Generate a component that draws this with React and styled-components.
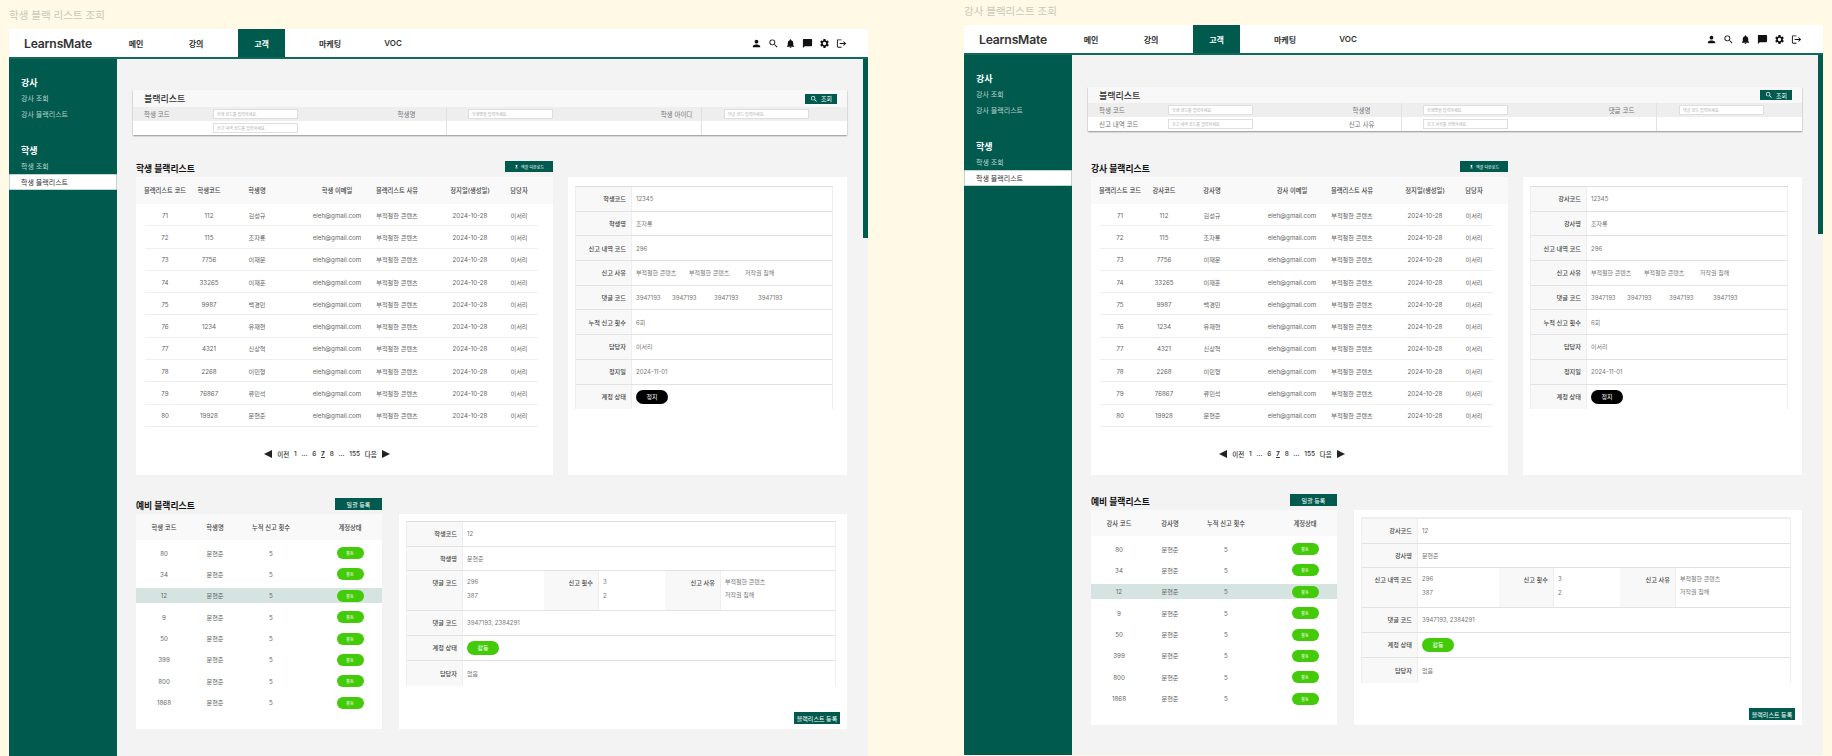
import React from 'react';
import styled, { createGlobalStyle } from 'styled-components';
import {
  MdPerson,
  MdSearch,
  MdNotifications,
  MdChatBubble,
  MdSettings,
  MdLogout,
  MdFileUpload,
} from 'react-icons/md';

const GREEN = '#005A4E';
const PILL = '#43CA08';
const FONT = 'Inter, "Noto Sans CJK KR", sans-serif';

const GlobalStyle = createGlobalStyle`
  html, body {
    margin: 0;
    height: 756px;
    overflow: hidden;
    background: #FFF9E6;
    font-family: ${FONT};
  }
  * { box-sizing: border-box; }
`;

const Page = styled.div`
  display: flex;
  gap: 96px;
  padding-left: 9px;
  width: 1832px;
  height: 756px;
`;

const Screen = styled.div`
  display: flex;
  flex-direction: column;
  width: 859px;
  height: 756px;
`;

const ScreenTitle = styled.div`
  height: ${(p) => p.$top}px;
  padding-bottom: ${(p) => p.$pad}px;
  display: flex;
  align-items: center;
  font-size: 10.5px;
  color: #c9c8bd;
  flex: none;
`;

const Frame = styled.div`
  position: relative;
  flex: 1;
  min-height: 0;
  display: flex;
  flex-direction: column;
  margin-bottom: ${(p) => p.$bottom}px;
`;

const Header = styled.header`
  display: flex;
  align-items: stretch;
  height: 30px;
  flex: none;
  background: #fff;
  border-bottom: 2px solid #126a5d;
  padding-right: 21px;
`;

const Logo = styled.div`
  width: 103.5px;
  padding-left: 15px;
  display: flex;
  align-items: center;
  font-size: 12.2px;
  font-weight: 600;
  letter-spacing: -0.2px;
  color: #333;
`;

const NavItem = styled.div`
  width: 47px;
  margin-left: ${(p) => p.$ml}px;
  display: flex;
  align-items: center;
  justify-content: center;
  font-size: 8px;
  font-weight: 600;
  color: ${(p) => (p.$active ? '#fff' : '#333')};
  background: ${(p) => (p.$active ? GREEN : 'transparent')};
`;

const IconBar = styled.div`
  margin-left: auto;
  display: flex;
  align-items: center;
  gap: 6px;
  font-size: 11px;
  color: #111;

  svg { display: block; }
`;

const Body = styled.div`
  flex: 1;
  min-height: 0;
  display: flex;
`;

const Sidebar = styled.nav`
  width: 108px;
  flex: none;
  background: ${GREEN};
  padding-top: 15px;
`;

const SideGroup = styled.div`
  margin-bottom: 20px;
`;

const SideTitle = styled.div`
  height: 16px;
  padding-left: 12px;
  display: flex;
  align-items: center;
  font-size: 9px;
  font-weight: 700;
  color: #fff;
`;

const SideItem = styled.div`
  height: 16px;
  padding-left: 12px;
  display: flex;
  align-items: center;
  font-size: 7px;
  color: ${(p) => (p.$active ? '#333' : 'rgba(255,255,255,0.72)')};
  background: ${(p) => (p.$active ? '#fff' : 'transparent')};
  box-shadow: ${(p) => (p.$active ? 'inset 0 0 0 0.5px #7fb0a8' : 'none')};
`;

const Main = styled.main`
  flex: 1;
  min-width: 0;
  background: #f3f3f3;
  padding: ${(p) => p.$pad}px 21px 0 16px;
`;

const ScrollThumb = styled.div`
  position: absolute;
  top: 30px;
  right: 0;
  width: 5px;
  height: 179px;
  background: ${GREEN};
`;

const SearchPanel = styled.section`
  background: #fff;
  box-shadow: 0 1px 1.5px rgba(0, 0, 0, 0.4);
  margin-bottom: ${(p) => p.$mb}px;
`;

const SearchHead = styled.div`
  height: ${(p) => p.$h}px;
  background: #f8f8f8;
  padding: 0 10px 0 11px;
  display: flex;
  align-items: center;
  justify-content: space-between;
`;

const SearchTitle = styled.h2`
  margin: 0;
  font-size: 9px;
  font-weight: 500;
  color: #333;
`;

const SearchButton = styled.button`
  width: 32px;
  height: 10px;
  border: 0;
  padding: 0;
  background: ${GREEN};
  color: #fff;
  font-family: inherit;
  font-size: 6px;
  display: flex;
  align-items: center;
  justify-content: center;
  gap: 3px;
`;

const SearchRow = styled.div`
  display: grid;
  grid-template-columns: 80px 154px 80px 205px 50px 145px;
  height: 14px;
  background: ${(p) => (p.$shaded ? '#eeeeee' : '#fff')};
`;

const SearchLabel = styled.div`
  display: flex;
  align-items: center;
  white-space: nowrap;
  font-size: 6.5px;
  color: #777;
  justify-content: ${(p) => (p.$left ? 'flex-start' : 'center')};
  padding-left: ${(p) => (p.$left ? 11 : 0)}px;
  padding-right: ${(p) => p.$shift || 0}px;
  border-right: ${(p) => (p.$divider ? '1px solid #e2e2e2' : '0')};
`;

const SearchCell = styled.div`
  display: flex;
  align-items: center;
  padding-left: ${(p) => p.$pad || 0}px;
`;

const SearchInput = styled.input`
  width: 85px;
  height: 10px;
  border: 1px solid #dfdfdf;
  background: #fff;
  padding: 0 3px;
  font-family: inherit;
  font-size: 4px;

  &::placeholder { color: #aaa; }
`;

const SectionHead = styled.div`
  display: flex;
  justify-content: space-between;
  align-items: center;
  height: 16px;
  margin-left: 3px;
  width: ${(p) => p.$w}px;
`;

const SectionTitle = styled.h3`
  margin: 0 0 2px;
  font-size: 8.8px;
  font-weight: 700;
  color: #111;
`;

const GreenButton = styled.button`
  align-self: flex-start;
  width: ${(p) => p.$w}px;
  height: ${(p) => p.$h}px;
  border: 0;
  padding: 0;
  background: ${GREEN};
  color: #fff;
  font-family: inherit;
  font-size: ${(p) => p.$size}px;
  display: flex;
  align-items: center;
  justify-content: center;
  gap: 2px;
  white-space: nowrap;
`;

const SectionBody = styled.div`
  display: flex;
  gap: ${(p) => p.$gap}px;
  margin-left: 3px;
  margin-bottom: ${(p) => p.$mb || 0}px;
`;

const Card = styled.div`
  width: ${(p) => p.$w}px;
  height: ${(p) => p.$h}px;
  flex: none;
  background: #fff;
`;

const LIST_COLS = '58px 30px 78px 70px 50px 82px 30px 19px';

const ListHead = styled.div`
  display: grid;
  grid-template-columns: ${LIST_COLS};
  height: 27px;
  background: #f9f9f9;
  font-size: 6.3px;
  font-weight: 500;
  color: #444;
`;

const ListRow = styled.div`
  display: grid;
  grid-template-columns: ${LIST_COLS};
  height: 22.3px;
  font-size: 6.2px;
  color: #666;
  background: linear-gradient(#eee, #eee) 9px 100% / 393px 1px no-repeat;
`;

const ListCell = styled.div`
  display: flex;
  align-items: center;
  justify-content: center;
  white-space: nowrap;

  &:nth-child(3) { padding-right: 12px; }
  &:nth-child(6) { padding-left: 14px; }
`;

const Pager = styled.div`
  display: flex;
  align-items: center;
  justify-content: center;
  gap: 4.8px;
  height: 16px;
  margin-top: 19px;
  padding-right: 35px;
  font-size: 6.5px;
  font-weight: 500;
  color: #333;
`;

const PageNum = styled.span`
  text-decoration: ${(p) => (p.$current ? 'underline' : 'none')};
  font-weight: ${(p) => (p.$current ? 700 : 500)};
`;

const PagerArrow = styled.svg`
  width: 8px;
  height: 8px;
  fill: #222;
`;

const DetailCard = styled(Card)`
  display: flex;
  flex-direction: column;
  padding: ${(p) => p.$pad};
`;

const DetailTable = styled.div`
  border-top: ${(p) => (p.$heavy ? '2px solid #eee' : '1px solid #ddd')};
  border-left: 1px solid #eee;
  border-right: 1px solid #eee;
`;

const DetailRow = styled.div`
  display: grid;
  grid-template-columns: ${(p) => p.$cols || '56px 1fr'};
  height: ${(p) => p.$h}px;
  border-bottom: ${(p) => (p.$last ? '0' : '1px solid #e2e2e2')};
`;

const DetailLabel = styled.div`
  background: #f8f8f8;
  border-right: 1px solid #eee;
  padding: ${(p) => (p.$top ? '7px 5px 0 0' : '0 5px 0 0')};
  display: flex;
  align-items: ${(p) => (p.$top ? 'flex-start' : 'center')};
  justify-content: flex-end;
  white-space: nowrap;
  font-size: 6.2px;
  font-weight: 500;
  color: #444;
`;

const DetailValue = styled.div`
  padding: ${(p) => (p.$top ? '7px 0 0 4px' : '0 0 0 4px')};
  display: ${(p) => (p.$top ? 'block' : 'flex')};
  align-items: center;
  font-size: 6px;
  color: #777;
  white-space: nowrap;
`;

const ValueGrid = styled.div`
  display: grid;
  grid-template-columns: ${(p) => p.$cols};
`;

const StackLine = styled.div`
  line-height: 7px;
  margin-bottom: ${(p) => p.$gap}px;
`;

const Pill = styled.span`
  display: inline-flex;
  align-items: center;
  justify-content: center;
  width: ${(p) => (p.$small ? 27 : 32)}px;
  height: ${(p) => (p.$small ? 12 : 14)}px;
  border-radius: 7px;
  background: ${(p) => (p.$stop ? '#000' : PILL)};
  color: #fff;
  font-size: ${(p) => (p.$small ? 4 : 6)}px;
`;

const PRE_COLS = '56px 46px 78px 68px';

const PreHead = styled.div`
  display: grid;
  grid-template-columns: ${PRE_COLS};
  height: 26px;
  background: #f9f9f9;
  font-size: 6.3px;
  font-weight: 500;
  color: #444;
`;

const PreList = styled.div`
  display: flex;
  flex-direction: column;
  gap: 6.4px;
  padding-top: 5.5px;
`;

const PreRow = styled.div`
  display: grid;
  grid-template-columns: ${PRE_COLS};
  height: 15px;
  font-size: 6.2px;
  color: #666;
  background: ${(p) => (p.$active ? '#D5E4E1' : 'transparent')};
`;

const RegisterRow = styled.div`
  margin-top: auto;
  margin-right: -4px;
  display: flex;
  justify-content: flex-end;
`;

const rows = [
  ['71', '112', '김성규'],
  ['72', '115', '조자룡'],
  ['73', '7756', '이재문'],
  ['74', '33265', '이재훈'],
  ['75', '9987', '백경민'],
  ['76', '1234', '유재현'],
  ['77', '4321', '신상혁'],
  ['78', '2268', '이민형'],
  ['79', '76867', '류민석'],
  ['80', '19928', '문현준'],
];

const preCodes = ['80', '34', '12', '9', '50', '399', '800', '1868'];

const navItems = [
  { label: '메인', ml: 0 },
  { label: '강의', ml: 13 },
  { label: '고객', ml: 18.5, active: true },
  { label: '마케팅', ml: 21.5 },
  { label: 'VOC', ml: 16 },
];

const pages = ['1', '...', '6', '7', '8', '...', '155'];

const SCREENS = [
  {
    who: '학생',
    title: '학생 블랙 리스트 조회',
    top: 29,
    titlePad: 1,
    frameBottom: 0,
    mainPad: 31,
    panelMb: 26,
    searchHead: 17,
    sectionGap: 23,
    thirdLabel: '학생 아이디',
    thirdShift: 0,
    secondLabel: '',
    rowLabel: '',
    heavy: false,
    reportLabel: '댓글 코드',
    cellCode: '학생코드',
    cellName: '학생명',
  },
  {
    who: '강사',
    title: '강사 블랙리스트 조회',
    top: 25,
    titlePad: 5,
    frameBottom: 1,
    mainPad: 32,
    panelMb: 30,
    searchHead: 16,
    sectionGap: 19,
    thirdLabel: '댓글 코드',
    thirdShift: 20,
    secondLabel: '신고 사유',
    rowLabel: '신고 내역 코드',
    heavy: true,
    reportLabel: '신고 내역 코드',
    cellCode: '강사코드',
    cellName: '강사명',
  },
];

const BlacklistScreen = ({ cfg }) => {
  const { who } = cfg;
  return (
    <Screen>
      <ScreenTitle $top={cfg.top} $pad={cfg.titlePad}>{cfg.title}</ScreenTitle>
      <Frame $bottom={cfg.frameBottom}>
        <Header>
          <Logo>LearnsMate</Logo>
          {navItems.map((n) => (
            <NavItem key={n.label} $ml={n.ml} $active={n.active}>{n.label}</NavItem>
          ))}
          <IconBar>
            <MdPerson />
            <MdSearch />
            <MdNotifications />
            <MdChatBubble />
            <MdSettings />
            <MdLogout />
          </IconBar>
        </Header>
        <ScrollThumb />
        <Body>
          <Sidebar>
            <SideGroup>
              <SideTitle>강사</SideTitle>
              <SideItem>강사 조회</SideItem>
              <SideItem>강사 블랙리스트</SideItem>
            </SideGroup>
            <SideGroup>
              <SideTitle>학생</SideTitle>
              <SideItem>학생 조회</SideItem>
              <SideItem $active>학생 블랙리스트</SideItem>
            </SideGroup>
          </Sidebar>
          <Main $pad={cfg.mainPad}>
            <SearchPanel $mb={cfg.panelMb}>
              <SearchHead $h={cfg.searchHead}>
                <SearchTitle>블랙리스트</SearchTitle>
                <SearchButton><MdSearch size={8} />조회</SearchButton>
              </SearchHead>
              <SearchRow $shaded>
                <SearchLabel $left>학생 코드</SearchLabel>
                <SearchCell><SearchInput placeholder="학생 코드를 입력하세요." /></SearchCell>
                <SearchLabel $divider>학생명</SearchLabel>
                <SearchCell $pad={21}><SearchInput placeholder="학생명을 입력하세요." /></SearchCell>
                <SearchLabel $divider $shift={cfg.thirdShift}>{cfg.thirdLabel}</SearchLabel>
                <SearchCell $pad={22}><SearchInput placeholder="댓글 코드 입력하세요." /></SearchCell>
              </SearchRow>
              <SearchRow>
                <SearchLabel $left>{cfg.rowLabel}</SearchLabel>
                <SearchCell><SearchInput placeholder="신고 내역 코드를 입력하세요." /></SearchCell>
                <SearchLabel $divider>{cfg.secondLabel}</SearchLabel>
                <SearchCell $pad={21}>
                  {cfg.secondLabel && <SearchInput placeholder="신고 사유를 선택하세요." />}
                </SearchCell>
                <SearchLabel $divider />
                <SearchCell />
              </SearchRow>
            </SearchPanel>

            <SectionHead $w={417}>
              <SectionTitle>{who} 블랙리스트</SectionTitle>
              <GreenButton $w={48} $h={11} $size={4}><MdFileUpload size={5} />엑셀 다운로드</GreenButton>
            </SectionHead>
            <SectionBody $gap={15} $mb={cfg.sectionGap}>
              <Card $w={417} $h={298}>
                <ListHead>
                  <ListCell>블랙리스트 코드</ListCell>
                  <ListCell>{cfg.cellCode}</ListCell>
                  <ListCell>{cfg.cellName}</ListCell>
                  <ListCell>{who} 이메일</ListCell>
                  <ListCell>블랙리스트 사유</ListCell>
                  <ListCell>정지일(생성일)</ListCell>
                  <ListCell>담당자</ListCell>
                </ListHead>
                {rows.map(([id, code, name]) => (
                  <ListRow key={id}>
                    <ListCell>{id}</ListCell>
                    <ListCell>{code}</ListCell>
                    <ListCell>{name}</ListCell>
                    <ListCell>eleh@gmail.com</ListCell>
                    <ListCell>부적절한 콘텐츠</ListCell>
                    <ListCell>2024-10-28</ListCell>
                    <ListCell>이서리</ListCell>
                  </ListRow>
                ))}
                <Pager>
                  <PagerArrow viewBox="0 0 8 8"><polygon points="0,4 8,0 8,8" /></PagerArrow>
                  <span>이전</span>
                  {pages.map((p, i) => (
                    <PageNum key={i} $current={p === '7'}>{p}</PageNum>
                  ))}
                  <span>다음</span>
                  <PagerArrow viewBox="0 0 8 8"><polygon points="0,0 8,4 0,8" /></PagerArrow>
                </Pager>
              </Card>
              <DetailCard $w={279} $h={298} $pad="9px 14px 0 7px">
                <DetailTable>
                  <DetailRow $h={24.7}><DetailLabel>{cfg.cellCode}</DetailLabel><DetailValue>12345</DetailValue></DetailRow>
                  <DetailRow $h={24.7}><DetailLabel>{cfg.cellName}</DetailLabel><DetailValue>조자룡</DetailValue></DetailRow>
                  <DetailRow $h={24.7}><DetailLabel>신고 내역 코드</DetailLabel><DetailValue>296</DetailValue></DetailRow>
                  <DetailRow $h={24.7}>
                    <DetailLabel>신고 사유</DetailLabel>
                    <DetailValue>
                      <ValueGrid $cols="53px 56px auto">
                        <span>부적절한 콘텐츠</span>
                        <span>부적절한 콘텐츠</span>
                        <span>저작권 침해</span>
                      </ValueGrid>
                    </DetailValue>
                  </DetailRow>
                  <DetailRow $h={24.7}>
                    <DetailLabel>댓글 코드</DetailLabel>
                    <DetailValue>
                      <ValueGrid $cols="36px 42px 44px auto">
                        <span>3947193</span>
                        <span>3947193</span>
                        <span>3947193</span>
                        <span>3947193</span>
                      </ValueGrid>
                    </DetailValue>
                  </DetailRow>
                  <DetailRow $h={24.7}><DetailLabel>누적 신고 횟수</DetailLabel><DetailValue>6회</DetailValue></DetailRow>
                  <DetailRow $h={24.7}><DetailLabel>담당자</DetailLabel><DetailValue>이서리</DetailValue></DetailRow>
                  <DetailRow $h={24.7}><DetailLabel>정지일</DetailLabel><DetailValue>2024-11-01</DetailValue></DetailRow>
                  <DetailRow $h={24.7} $last><DetailLabel>계정 상태</DetailLabel><DetailValue><Pill $stop>정지</Pill></DetailValue></DetailRow>
                </DetailTable>
              </DetailCard>
            </SectionBody>

            <SectionHead $w={246}>
              <SectionTitle>예비 블랙리스트</SectionTitle>
              <GreenButton $w={47} $h={12} $size={6}>일괄 등록</GreenButton>
            </SectionHead>
            <SectionBody $gap={17}>
              <Card $w={246} $h={215}>
                <PreHead>
                  <ListCell>{who} 코드</ListCell>
                  <ListCell>{cfg.cellName}</ListCell>
                  <ListCell>누적 신고 횟수</ListCell>
                  <ListCell>계정상태</ListCell>
                </PreHead>
                <PreList>
                  {preCodes.map((code) => (
                    <PreRow key={code} $active={code === '12'}>
                      <ListCell>{code}</ListCell>
                      <ListCell>문현준</ListCell>
                      <ListCell>5</ListCell>
                      <ListCell><Pill $small>활동</Pill></ListCell>
                    </PreRow>
                  ))}
                </PreList>
              </Card>
              <DetailCard $w={448} $h={215} $pad="7px 11px 5px 7px">
                <DetailTable $heavy={cfg.heavy}>
                  <DetailRow $h={24.7}><DetailLabel>{cfg.cellCode}</DetailLabel><DetailValue>12</DetailValue></DetailRow>
                  <DetailRow $h={24.3}><DetailLabel>{cfg.cellName}</DetailLabel><DetailValue>문현준</DetailValue></DetailRow>
                  <DetailRow $h={40} $cols="56px 81px 55px 66px 56px 1fr">
                    <DetailLabel $top>{cfg.reportLabel}</DetailLabel>
                    <DetailValue $top>
                      <StackLine $gap={7.5}>296</StackLine>
                      <StackLine $gap={0}>387</StackLine>
                    </DetailValue>
                    <DetailLabel $top>신고 횟수</DetailLabel>
                    <DetailValue $top>
                      <StackLine $gap={7.5}>3</StackLine>
                      <StackLine $gap={0}>2</StackLine>
                    </DetailValue>
                    <DetailLabel $top>신고 사유</DetailLabel>
                    <DetailValue $top>
                      <StackLine $gap={6}>부적절한 콘텐츠</StackLine>
                      <StackLine $gap={0}>저작권 침해</StackLine>
                    </DetailValue>
                  </DetailRow>
                  <DetailRow $h={25}><DetailLabel>댓글 코드</DetailLabel><DetailValue>3947193, 2384291</DetailValue></DetailRow>
                  <DetailRow $h={25}><DetailLabel>계정 상태</DetailLabel><DetailValue><Pill>활동</Pill></DetailValue></DetailRow>
                  <DetailRow $h={25} $last><DetailLabel>담당자</DetailLabel><DetailValue>없음</DetailValue></DetailRow>
                </DetailTable>
                <RegisterRow>
                  <GreenButton $w={46} $h={12} $size={6}>블랙리스트 등록</GreenButton>
                </RegisterRow>
              </DetailCard>
            </SectionBody>
          </Main>
        </Body>
      </Frame>
    </Screen>
  );
};

const App = () => (
  <>
    <GlobalStyle />
    <Page>
      {SCREENS.map((cfg) => (
        <BlacklistScreen key={cfg.who} cfg={cfg} />
      ))}
    </Page>
  </>
);

export default App;
